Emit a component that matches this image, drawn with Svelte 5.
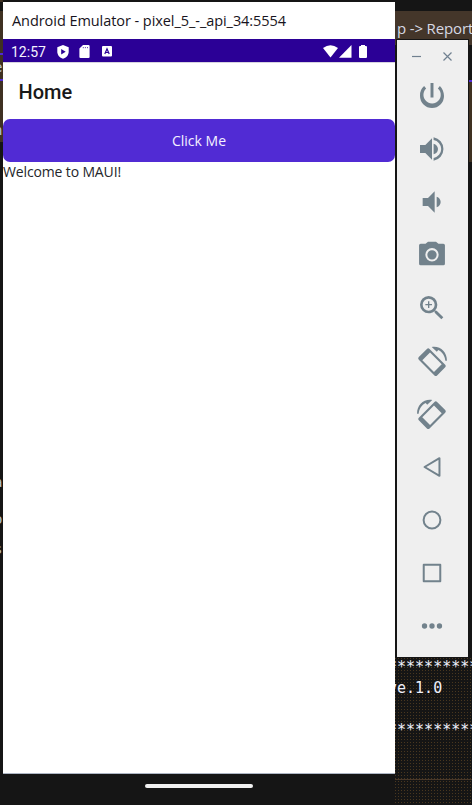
<script>
  const tools = [
    { name: 'Power', d: 'M13.1 2.2h-2.2v11h2.2v-11zM17.9 4.5l-1.5 1.9A6.5 6.5 0 0 1 18.5 12a6.5 6.5 0 1 1-10.9-5.6L6.1 4.5A8.93 8.93 0 0 0 3 12a9 9 0 0 0 18 0c0-2.9-1.2-5.6-3.1-7.5z' },
    { name: 'Volume up', d: 'M3 9v6h4l5 5V4L7 9H3zm13.5 3A4.5 4.5 0 0 0 13.200 7.970v8.050A4.5 4.5 0 0 0 16.5 12zM13.200 3.230v2.060a6.800 6.800 0 0 1 0 13.420v2.060a8.900 8.900 0 0 0 0-17.540z' },
    { name: 'Volume down', d: 'M18.5 12A4.5 4.5 0 0 0 15.500 7.970v8.050A4.5 4.5 0 0 0 18.5 12zM5 9v6h4l5 5V4L9 9H5z' },
    { name: 'Screenshot', d: 'M9 2 7.17 3.5H3.5Q2.3 3.5 2.3 4.7V18.5q0 1.2 1.2 1.2h17q1.2 0 1.2-1.2V4.7q0-1.2-1.2-1.2h-3.67L15 2H9zm3 14.8a5 5 0 1 1 0-10 5 5 0 0 1 0 10zm0-1.4a3.5 3.5 0 1 0 0-7 3.5 3.5 0 0 0 0 7z' },
    { name: 'Zoom', d: 'M15.5 14h-.79l-.28-.27A6.47 6.47 0 0 0 16 9.5 6.5 6.5 0 1 0 9.5 16c1.61 0 3.09-.59 4.23-1.57l.27.28v.79l5 4.99L20.49 19l-4.99-5zm-6 0a4.5 4.5 0 1 1 0-9 4.5 4.5 0 0 1 0 9zM12 10h-2v2H9v-2H7V9h2V7h1v2h2v1z' },
    { name: 'Rotate left', rotate: true },
    { name: 'Rotate right', rotate: true, flip: true },
    { name: 'Back', line: 'M17.6 5.4v13.2L6.4 12z' },
    { name: 'Home', line: 'M12 5.7a6.3 6.3 0 1 1 0 12.6 6.3 6.3 0 0 1 0-12.6z' },
    { name: 'Overview', line: 'M5.8 5.8h12.4v12.4H5.8z' },
    { name: 'More', d: 'M6.4 10a2 2 0 1 0 0 4 2 2 0 0 0 0-4zm5.6 0a2 2 0 1 0 0 4 2 2 0 0 0 0-4zm5.6 0a2 2 0 1 0 0 4 2 2 0 0 0 0-4z' }
  ];
</script>

<div class="desktop">
  <div class="strip left"></div>
  <div class="topband"></div>
  <div class="strip right"></div>
  <div class="editor">p -&gt; Report</div>
  <pre class="terminal">**********
ve.1.0

**********</pre>
  <div class="rule"></div>
  <i class="fleck" style="top:53px"></i>
  <i class="fleck" style="top:79px"></i>
  <b class="glyph" style="top:59px">e</b>
  <b class="glyph" style="top:122px">n</b>
  <b class="glyph" style="top:474px">a</b>
  <b class="glyph" style="top:511px">o</b>
  <b class="glyph" style="top:541px">s</b>

  <section class="emulator">
    <header class="title">Android Emulator - pixel_5_-_api_34:5554</header>
    <div class="status">
      <span class="clock">12:57</span>
      <svg class="shield" width="12" height="14" viewBox="0 0 12 14"><path fill="#fff" d="M6 0l5.7 2.2v4.5C11.7 10 9.3 12.7 6 13.8 2.7 12.7.3 10 .3 6.7V2.2z"/><path fill="#2b0096" d="M4.2 4v5.6L8.7 6.8z"/></svg>
      <svg class="sd" width="11" height="13" viewBox="0 0 11 13"><path fill="#fff" d="M4 0h5.5Q10.6 0 10.6 1.1v10.8q0 1.1-1.1 1.1h-8Q.4 13 .4 11.9V3.6z"/><path stroke="#2b0096" stroke-width=".7" d="M4.3 2v1.2M6.4 2v1.2M8.5 2v1.2"/></svg>
      <svg class="letter" width="10" height="11" viewBox="0 0 10 11"><rect width="10" height="10.6" rx="1" fill="#fff"/><path d="M2.8 8 5 2.7 7.2 8M3.6 6.5h2.8" fill="none" stroke="#2b0096" stroke-width="1.2"/></svg>
      <svg class="wifi" width="15" height="13" viewBox="0 0 15 13"><path fill="#fff" d="M0 3Q7.5-2.6 15 3L7.5 12.6z"/></svg>
      <svg class="signal" width="13" height="13" viewBox="0 0 13 13"><path fill="#fff" d="M12.5 0v12.7H0z"/></svg>
      <svg class="battery" width="8" height="13" viewBox="0 0 8 13"><path fill="#fff" d="M2 0h4v1H7q1 0 1 1v9.8q0 1.2-1 1.2H1q-1 0-1-1.2V2q0-1 1-1h1z"/></svg>
    </div>
    <main>
      <h1>Home</h1>
      <button>Click Me</button>
      <p>Welcome to MAUI!</p>
    </main>
    <footer><span></span></footer>
  </section>

  <aside>
    <div class="controls">
      <svg width="9" height="11" viewBox="0 0 9 11"><path d="M0 5.5h9"/></svg>
      <svg width="9" height="11" viewBox="0 0 9 11"><path d="M.5 1.5l8 8M8.5 1.5l-8 8"/></svg>
    </div>
    {#each tools as tool}
      <div class="tool">
        <svg width="32" height="32" viewBox="0 0 24 24" role="img" aria-label={tool.name}>
          {#if tool.rotate}
            <g transform={tool.flip ? 'translate(24 0) scale(-1 1)' : undefined}>
              <path fill-rule="evenodd" transform="translate(12 12.9) rotate(45)" d="M-8.3-5.7H8.3Q9.7-5.7 9.7-4.3V4.3Q9.7 5.7 8.3 5.7H-8.3Q-9.7 5.7-9.7 4.3V-4.3Q-9.7-5.7-8.3-5.7zM-6.2-4.1V4.1H6.2V-4.1z"/>
              <path d="M11.8 1.5C18 .4 23.4 5 23.2 11.9H22C21.7 8.1 19.7 5.2 16.7 3.8L15.6 5.1z"/>
            </g>
          {:else if tool.line}
            <path class="line" d={tool.line}/>
          {:else}
            <path fill-rule="evenodd" d={tool.d}/>
          {/if}
        </svg>
      </div>
    {/each}
  </aside>
</div>

<style>
  .desktop { position: relative; width: 472px; height: 805px; overflow: hidden; background: #151515; }
  .strip { position: absolute; background: #3f3122; }
  .left { left: 0; top: 0; width: 3px; height: 142px; }
  .right { left: 469px; top: 80px; width: 3px; height: 82px; border-top: 2px solid #512bd4; box-sizing: border-box; }
  .topband { position: absolute; left: 395px; top: 11px; width: 77px; height: 34px; background: #44362a; }
  .left::after { content: ''; position: absolute; left: 0; top: 2px; width: 3px; height: 9px; background: #151515; }
  .editor { position: absolute; left: 397px; top: 18px; white-space: nowrap; font: 15px/20px "Open Sans", "Noto Sans", sans-serif; color: #d7d9e4; letter-spacing: -.15px; }
  .terminal { position: absolute; left: 388px; top: 657px; width: 84px; height: 148px; margin: 0; color: #eef0fc; font: 15px/21px "DejaVu Sans Mono", monospace; background: radial-gradient(circle, #49371f .65px, transparent .8px) 0 0 / 3px 3px; }
  .rule { position: absolute; left: 395px; top: 779px; width: 77px; height: 1px; background: #493829; }
  .fleck { position: absolute; left: 0; width: 3px; height: 2px; background: #512bd4; }
  .glyph { position: absolute; left: -6px; font: 14px/16px "DejaVu Sans Mono", monospace; color: #b8c4d0; }

  .emulator { position: absolute; left: 3px; top: 2px; width: 392px; height: 803px; display: flex; flex-direction: column; background: #fff; }
  .title { height: 37px; box-sizing: border-box; padding-left: 9px; font: 14.5px/37px "Open Sans", "Noto Sans", sans-serif; color: #171320; white-space: nowrap; letter-spacing: -.06px; }
  .status { height: 23px; display: flex; align-items: center; background: #2b0096; padding: 2px 28px 0 8px; box-sizing: border-box; }
  .clock { width: 46px; color: #f5f3ff; font: 14px/20px Roboto, sans-serif; }
  .sd { margin-left: 10px; }
  .letter { margin-left: 12px; }
  .wifi { margin-left: auto; }
  .signal { margin-left: 1px; }
  .battery { margin-left: 7px; }
  main { flex: 1; border-top: 1px solid #d6d3df; border-bottom: 1px solid #aeb6c4; box-sizing: border-box; }
  h1 { margin: 0; height: 56px; padding: 2px 0 0 15.5px; box-sizing: border-box; font: 500 20px/54px Roboto, sans-serif; color: #191919; }
  button { display: block; width: 392px; height: 43px; padding: 0; border: 0; border-radius: 7px; background: #512bd4; color: #f4f1ff; font: 14px/43px "Open Sans", sans-serif; }
  p { margin: 0; color: #24262a; font: 14px/20px "Open Sans", sans-serif; letter-spacing: -.14px; }
  footer { height: 31px; background: #151515; display: flex; justify-content: center; }
  footer span { width: 108px; height: 4px; margin: 10px 1px 0 0; border-radius: 2px; background: #f1f1f1; }

  aside { position: absolute; left: 397px; top: 40px; width: 71px; height: 617px; box-sizing: border-box; padding-right: 1px; background: #efefef; box-shadow: 0 0 0 1px #151515; display: flex; flex-direction: column; align-items: center; }
  .controls { display: flex; gap: 22px; height: 29.5px; padding: 11px 0 0 0; box-sizing: border-box; }
  .controls svg { fill: none; stroke: #708090; stroke-width: 1.2; }
  .tool { height: 53px; display: flex; align-items: center; }
  .tool svg { display: block; fill: #72828c; }
  .line { fill: none; stroke: #72828c; stroke-width: 1.5; stroke-linejoin: round; }
</style>
